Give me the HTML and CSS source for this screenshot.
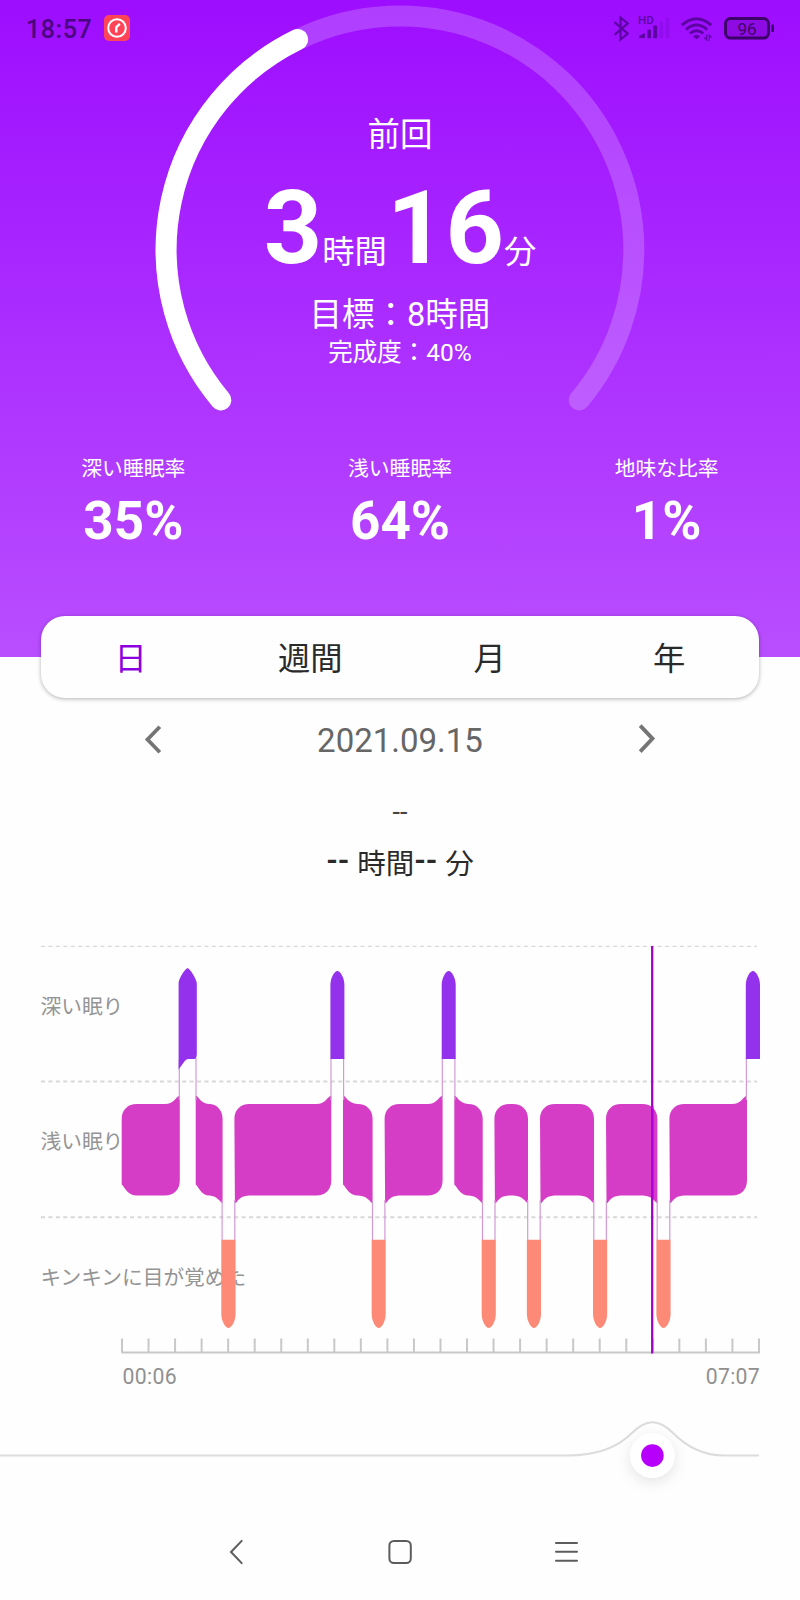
FILE: index.html
```html
<!DOCTYPE html>
<html lang="ja">
<head>
<meta charset="utf-8">
<title>睡眠</title>
<link rel="stylesheet" href="styles.css">
</head>
<body>
<header class="hero">
  <svg class="gauge" viewBox="0 0 800 430">
    <path class="gauge-track" d="M220.8 400A233.800 233.800 0 1 1 579.2 400"/>
    <path class="gauge-value" d="M220.8 400A233.800 233.800 0 0 1 297.6 39.500"/>
  </svg>
  <div class="hero-body">
    <div class="status">
      <span class="clock">18:57</span>
      <svg class="app-icon" width="26" height="26" viewBox="0 0 26 26">
        <rect width="26" height="26" rx="5" fill="#ff4458"/>
        <circle cx="13" cy="13" r="8.8" fill="none" stroke="#fff" stroke-width="2"/>
        <path d="M12.3 17.5V12.2L15.8 8.8" fill="none" stroke="#fff" stroke-width="2.4"/>
      </svg>
      <svg class="status-icons" width="164" height="30" viewBox="612 12 164 30">
        <path d="M614.5 22.2L627.7 33.6L620.6 39.5V17.5L627.7 23.4L614.5 34.8" fill="none" stroke="#5d04a3" stroke-width="2.2"/>
        <text class="hd" x="638" y="24.4">HD</text>
        <g fill="#5d04a3">
          <path d="M639 38V36L645 33V38Z"/>
          <rect x="647.4" y="29.5" width="3.6" height="8.8" rx="1"/>
          <rect x="653.3" y="25.5" width="3.8" height="12.8" rx="1"/>
          <rect x="659.5" y="21.6" width="3.7" height="16.7" rx="1" opacity=".2"/>
          <rect x="665.6" y="17.5" width="3.6" height="20.8" rx="1" opacity=".2"/>
          <path d="M692.8 36.3Q696.5 33.6 700.2 36.3L696.5 39.3Z"/>
        </g>
        <g fill="none" stroke="#5d04a3" stroke-width="3">
          <path d="M681.8 25.2Q696.5 12.2 711.3 25.2"/>
          <path d="M686 29.6Q696.5 20.4 707.2 29.6"/>
          <path d="M690 33.4Q696.5 28 703.2 33.4"/>
          <path stroke-width="1.2" d="M704.3 37.5L706.7 40V34.500M709.300 41V35L711.6 37.6"/>
        </g>
        <rect x="725.5" y="18.5" width="43" height="19.6" rx="5" fill="#8f0be4" stroke="#3d0369" stroke-width="3"/>
        <rect x="771.2" y="24.5" width="2.8" height="7.6" rx="1" fill="#3d0369"/>
        <text class="battery" x="747" y="34.6">96</text>
      </svg>
    </div>
    <div class="last">前回</div>
    <div class="duration"><b>3</b>時間<b>16</b>分</div>
    <div class="goal">目標：8時間</div>
    <div class="done">完成度：40%</div>
    <div class="stats">
      <div class="stat"><span>深い睡眠率</span><b>35%</b></div>
      <div class="stat"><span>浅い睡眠率</span><b>64%</b></div>
      <div class="stat"><span>地味な比率</span><b>1%</b></div>
    </div>
  </div>
</header>
<nav class="tabs">
  <span class="tab active">日</span><span class="tab">週間</span><span class="tab">月</span><span class="tab">年</span>
</nav>
<div class="date-row">
  <svg width="18" height="32" viewBox="0 0 18 32"><path d="M15.8 2.8L3.5 15.500L15.8 28.2"/></svg>
  <span>2021.09.15</span>
  <svg width="18" height="32" viewBox="0 0 18 32"><path d="M2.2 1.6L14.5 14.6L2.2 27.6"/></svg>
</div>
<div class="range">--</div>
<div class="picked"><b>--</b> 時間<b>--</b> 分</div>
<svg class="chart" width="800" height="460" viewBox="0 930 800 460">
  <g class="grid">
    <path d="M41 946.4H757"/>
    <path d="M41 1081.6H757M41 1217.3H757"/>
  </g>
  <g class="level">
    <text x="40.5" y="1013.5">深い眠り</text>
    <text x="40.5" y="1149">浅い眠り</text>
    <text x="40.5" y="1284.5">キンキンに目が覚めた</text>
  </g>
  <path class="axis" id="axis"/>
  <g id="plot"></g>
  <path class="cursor" d="M652.2 946V1353.5"/>
  <path class="cursor cursor-bright" d="M652.2 1106V1198"/>
  <g class="time">
    <text x="122.6" y="1384.3">00:06</text>
    <text x="760" y="1384.3" text-anchor="end">07:07</text>
  </g>
</svg>
<svg class="slider" width="800" height="110" viewBox="0 1390 800 110">
  <path d="M0 1455.5H568C598 1455.5 618 1447 632 1433C646 1418.500 659 1418.500 673 1433C687 1447 705 1455.500 724 1455.500H759"/>
  <circle class="knob" cx="652.4" cy="1455.6" r="22.500"/>
  <circle class="dot" cx="652.4" cy="1455.6" r="11.3"/>
</svg>
<footer class="system">
  <svg width="26" height="26" viewBox="0 0 26 26"><path d="M18.700 1.900L8 13L18.700 24.100"/></svg>
  <svg width="26" height="26" viewBox="0 0 26 26"><rect x="2.400" y="2" width="21.400" height="22" rx="4.500"/></svg>
  <svg width="26" height="26" viewBox="0 0 26 26"><path d="M5 4H26M5 12.800H26M5 21.700H26"/></svg>
</footer>
<script src="chart.js"></script>
</body>
</html>
```

FILE: styles.css
```css
body {
  margin: 0;
  width: 800px;
  height: 1600px;
  overflow: hidden;
  background: #fefefe;
  font-family: Roboto, "Noto Sans CJK JP", sans-serif;
  display: flex;
  flex-direction: column;
}
svg { display: block; flex: none; }
.hero {
  flex: none;
  height: 657px;
  display: grid;
  grid-template: 657px / 800px;
  color: #fff;
  background: linear-gradient(#9d0dff, #b94eff);
}
.gauge, .hero-body { grid-area: 1 / 1; }
.gauge { width: 800px; height: 430px; fill: none; stroke-width: 21; stroke-linecap: round; }
.gauge-track { stroke: rgba(255, 255, 255, .2); }
.gauge-value { stroke: #fff; }
.hero-body { display: flex; flex-direction: column; align-items: center; }
.status { height: 56px; width: 800px; display: flex; align-items: center; box-sizing: border-box; padding: 0 24px 0 26px; }
.clock { width: 78px; height: 56px; font-size: 25px; line-height: 59px; font-weight: 500; letter-spacing: .6px; color: #4b0482; }
.status-icons { margin-left: auto; margin-top: -2px; }
.hd { font-size: 11.500px; font-weight: 500; fill: #5d04a3; }
.battery { font-size: 17px; font-weight: 400; fill: #3d0369; text-anchor: middle; }
.last { margin-top: 55px; height: 48px; line-height: 48px; font-size: 32.500px; }
.duration { margin-top: 19px; height: 100px; line-height: 100px; font-size: 32.300px; white-space: nowrap; }
.duration b { font-size: 102px; }
.goal { margin-top: 14px; height: 46px; line-height: 46px; font-size: 32.500px; }
.done { height: 30px; line-height: 30px; font-size: 24.500px; }
.stats { width: 800px; display: grid; grid-template-columns: repeat(3, 1fr); margin-top: 85px; text-align: center; }
.stat { display: flex; flex-direction: column; }
.stat span { font-size: 20.800px; line-height: 32px; }
.stat b { font-size: 53px; line-height: 72px; }
.tabs {
  flex: none;
  display: grid;
  grid-template-columns: repeat(4, 1fr);
  width: 718px;
  height: 82px;
  margin: -41px 41px 0;
  border-radius: 24px;
  background: #fefefe;
  box-shadow: 0 1px 4px rgba(0, 0, 0, .3);
  font-size: 32.300px;
  line-height: 86px;
  text-align: center;
  color: #2a2a2a;
}
.active { color: #8c00e0; }
.date-row {
  display: flex;
  justify-content: space-between;
  align-items: center;
  height: 60px;
  margin: 12px 144px 0 144px;
  font-size: 33px;
  color: #666;
}
.date-row path { fill: none; stroke: #757575; stroke-width: 3.8; }
.range { margin-top: 26px; height: 32px; line-height: 32px; font-size: 27px; text-align: center; color: #444; }
.picked { margin-top: 17px; height: 40px; line-height: 40px; font-size: 28.500px; word-spacing: .8px; text-align: center; color: #2a2a2a; }
.picked b { line-height: 0; vertical-align: 4px; font-size: 29.500px; }
.chart { margin-top: 45px; }
.grid path { stroke: #d8d8d8; stroke-width: 2; stroke-dasharray: 4 3.430; }
.grid path:first-child { stroke-width: 1.200; }
.level { font-size: 20.700px; fill: #949494; }
.time { font-size: 21.200px; fill: #909090; letter-spacing: .3px; }
.axis { fill: none; stroke: #c8c8c8; stroke-width: 2; }
.light { fill: #d63dc6; }
.deep { fill: #9331ed; }
.awake { fill: #fc8a76; }
.link { stroke: #d39ad6; stroke-width: 1.200; }
.cursor { stroke: #9a08c4; stroke-width: 2.300; }
.cursor-bright { stroke: #b400dc; }
.slider path { fill: none; stroke: #dcdcdc; stroke-width: 2; }
.knob { fill: #fff; filter: drop-shadow(0 4px 7px rgba(0, 0, 0, .1)); }
.dot { fill: #b700fb; }
.system { display: flex; gap: 138px; padding: 39px 0 0 223px; }
.system svg { fill: none; stroke: #5c5c5c; stroke-width: 2; overflow: visible; stroke-linecap: round; }
```

FILE: chart.js
```js
// Edge kinds: r = rounded, u = flare up, d = flare down, c = chamfered
const light = [
  [121.7, 179.8, 'r', 'c', 'u', 'r'],
  [195.7, 222.6, 'u', 'c', 'r', 'd'],
  [234.4, 331.3, 'r', 'd', 'u', 'r'],
  [343.0, 372.6, 'u', 'c', 'r', 'd'],
  [384.6, 442.6, 'r', 'd', 'u', 'r'],
  [454.3, 482.7, 'u', 'c', 'r', 'd'],
  [494.4, 528.0, 'r', 'd', 'r', 'd'],
  [540.0, 594.0, 'r', 'd', 'r', 'd'],
  [606.0, 657.4, 'r', 'd', 'r', 'd'],
  [669.4, 747.0, 'r', 'd', 'u', 'r']
];
const deep = [[330.4, 344.4], [441.7, 455.7], [745.8, 760]];
const awake = [[221.3, 235.6], [371.7, 385.7], [481.7, 495.8], [526.9, 541], [593, 607.2], [656.4, 670.6]];
const T = 1104, B = 1195.4;
let out = '';

function path(cls, d) { out += '<path class="' + cls + '" d="' + d + '"/>'; }

for (const [a, b, tl, bl, tr, br] of light) {
  const r = Math.min(15, (b - a) / 2);
  let d = tl === 'u'
    ? `M${a} 1096h1.3Q${a + r * .5} ${T} ${a + r} ${T}`
    : `M${a} ${T + 15}C${a} ${T + 6} ${a + 6} ${T} ${a + r} ${T}`;
  d += `H${b - r}`;
  d += tr === 'u'
    ? `C${b - 6} ${T} ${b - 4} 1097 ${b - 1} 1096H${b}`
    : `C${b - 6} ${T} ${b} ${T + 6} ${b} ${T + 15}`;
  d += br === 'd'
    ? `V1203H${b - .7}C${b - 4} 1199 ${b - 8} ${B} ${b - r} ${B}`
    : `V${B - 15}C${b} ${B - 6} ${b - 6} ${B} ${b - r} ${B}`;
  d += `H${a + r}`;
  d += bl === 'd'
    ? `C${a + 8} ${B} ${a + 4} 1199 ${a + 1.5} 1203H${a + .5}Z`
    : `C${a + 6} ${B} ${a + 4} ${B - 7} ${a} ${B - 11}Z`;
  path('light', d);
}
for (const [a, b] of deep) {
  path('link', `M${a + .6} 1058V1100` + (b < 760 ? `M${b - .8} 1058V1100` : ''));
  const m = (a + b) / 2;
  path('deep', `M${a} 1059V985C${a} 978 ${m - 3} 971 ${m} 971S${b} 978 ${b} 985V1059Z`);
}
path('link', 'M179.3 1060V1100M196 1058V1100');
path('deep', 'M178.600 1069.500V983C179 978 185 969 187.600 968C190 969 196 978 196.800 983V1054Q196.800 1059 194 1059H188Q186 1059 184 1062Z');
for (const [a, b] of awake) {
  path('link', `M${a + .8} 1200V1240M${b - .8} 1200V1240`);
  const m = (a + b) / 2;
  path('awake', `M${a} 1239.700V1314C${a} 1321 ${m - 3} 1328 ${m} 1328S${b} 1321 ${b} 1314V1239.700Z`);
}
document.getElementById('plot').innerHTML = out;

let axis = 'M121.500 1352.600H760';
for (let i = 0; i <= 24; i++) axis += `M${(122 + i * 26.54).toFixed(2)} 1338.500V1352.600`;
document.getElementById('axis').setAttribute('d', axis);
```
